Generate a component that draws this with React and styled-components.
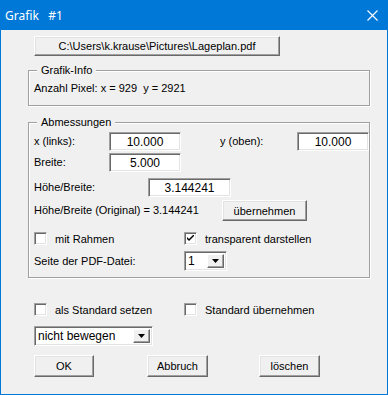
import React from 'react'
import styled, { createGlobalStyle } from 'styled-components'

const Global = createGlobalStyle`
	html, body {
		margin: 0;
		padding: 0;
		background: #f0f0f0;
	}
	body {
		font-family: "Liberation Sans", Arial, sans-serif;
		font-size: 11px;
		color: #000;
	}
`

const Window = styled.div`
	width: 388px;
	height: 395px;
	box-sizing: border-box;
	border: 1px solid #0078d7;
	border-top: none;
	background: #f0f0f0;
	display: flex;
	flex-direction: column;
`
const TitleBar = styled.div`
	height: 30px;
	flex-shrink: 0;
	background: #0078d7;
	color: #fff;
	display: flex;
	align-items: center;
	justify-content: space-between;
	padding: 0 9px 0 4px;
	font-family: "Noto Sans", "Open Sans", sans-serif;
	font-size: 12px;
	white-space: pre;
`
const Body = styled.div`
	display: flex;
	flex-direction: column;
	padding-left: 27px;
`
const Row = styled.div`
	display: flex;
	align-items: center;
	height: ${p => p.h || 19}px;
	margin-top: ${p => p.mt || 0}px;
	margin-left: ${p => p.ml || 0}px;
`
const Button = styled.div`
	box-sizing: border-box;
	width: ${p => p.w}px;
	height: ${p => p.h || 21}px;
	margin-left: ${p => p.ml || 0}px;
	margin-top: ${p => p.mt || 0}px;
	display: flex;
	align-items: center;
	justify-content: center;
	background: #f0f0f0;
	border: 1px solid;
	border-color: #fff #696969 #696969 #fff;
	box-shadow: inset -1px -1px #a0a0a0, inset 1px 1px #e3e3e3;
	white-space: nowrap;
`
const Group = styled.div`
	position: relative;
	box-sizing: border-box;
	width: 342px;
	height: ${p => p.h}px;
	margin-top: ${p => p.mt}px;
	border: 1px solid #a0a0a0;
	box-shadow: inset 1px 1px #fff, 1px 1px #fff;
	padding: ${p => p.pt}px 0 0 5px;
`
const Legend = styled.span`
	position: absolute;
	top: -7px;
	left: 8px;
	padding: 0 4px;
	line-height: 13px;
	background: #f0f0f0;
`
const Text = styled.span`
	display: inline-block;
	width: ${p => (p.w ? p.w + 'px' : 'auto')};
	margin-left: ${p => p.ml || 0}px;
	line-height: 13px;
	white-space: pre;
`
const Field = styled.div`
	box-sizing: border-box;
	width: ${p => p.w}px;
	height: ${p => p.h || 19}px;
	background: #fff;
	border: 1px solid;
	border-color: #a0a0a0 #fff #fff #a0a0a0;
	box-shadow: inset 1px 1px #696969, inset -1px -1px #e3e3e3;
	display: flex;
	align-items: center;
	justify-content: center;
	font-size: 12px;
`
const Combo = styled(Field)`
	justify-content: space-between;
	padding: 2px 2px 2px 3px;
	font-size: 12px;
`
const ArrowBtn = styled.div`
	box-sizing: border-box;
	width: 17px;
	height: 100%;
	background: #f0f0f0;
	border: 1px solid;
	border-color: #fff #696969 #696969 #fff;
	box-shadow: inset -1px -1px #a0a0a0;
	display: flex;
	align-items: center;
	justify-content: center;
`
const CheckItem = styled.label`
	display: flex;
	align-items: center;
	gap: 8px;
	width: ${p => (p.w ? p.w + 'px' : 'auto')};
`
const Box = styled.span`
	box-sizing: border-box;
	width: 13px;
	height: 13px;
	background: #fff;
	border: 1px solid;
	border-color: #a0a0a0 #fff #fff #a0a0a0;
	box-shadow: inset 1px 1px #696969, inset -1px -1px #e3e3e3;
	display: flex;
	align-items: center;
	justify-content: center;
`

const Arrow = () => (
	<svg width="7" height="4" viewBox="0 0 7 4">
		<path d="M0 0h7L3.5 4z" fill="#000" />
	</svg>
)

const Check = ({ checked, children, w }) => (
	<CheckItem w={w}>
		<Box>
			{checked && (
				<svg width="7" height="7" viewBox="0 0 7 7">
					<path d="M0 2v2l2 2 5-5V-1L2 4z" fill="#000" />
				</svg>
			)}
		</Box>
		<span>{children}</span>
	</CheckItem>
)

function App() {
	return (
		<Window>
			<Global />
			<TitleBar>
				<span>Grafik   #1</span>
				<svg width="11" height="11" viewBox="0 0 11 11">
					<path d="M0.5 0.5l10 10M10.5 0.5l-10 10" stroke="#fff" strokeWidth="1.1" />
				</svg>
			</TitleBar>
			<Body>
				<Button w={246} h={20} ml={6} mt={6}>C:\Users\k.krause\Pictures\Lageplan.pdf</Button>

				<Group h={36} mt={14} pt={11}>
					<Legend>Grafik-Info</Legend>
					<Text>Anzahl Pixel: x = 929  y = 2921</Text>
				</Group>

				<Group h={156} mt={16} pt={9}>
					<Legend>Abmessungen</Legend>
					<Row>
						<Text w={75}>x (links):</Text>
						<Field w={72}>10.000</Field>
						<Text w={77} ml={39}>y (oben):</Text>
						<Field w={72}>10.000</Field>
					</Row>
					<Row mt={2}>
						<Text w={75}>Breite:</Text>
						<Field w={72}>5.000</Field>
					</Row>
					<Row mt={6}>
						<Text w={114}>Höhe/Breite:</Text>
						<Field w={83}>3.144241</Field>
					</Row>
					<Row h={21} mt={3}>
						<Text w={188}>Höhe/Breite (Original) = 3.144241</Text>
						<Button w={85}>übernehmen</Button>
					</Row>
					<Row mt={8}>
						<Check w={150}>mit Rahmen</Check>
						<Check checked>transparent darstellen</Check>
					</Row>
					<Row h={20} mt={3}>
						<Text w={150}>Seite der PDF-Datei:</Text>
						<Combo w={43} h={20}>
							<span>1</span>
							<ArrowBtn><Arrow /></ArrowBtn>
						</Combo>
					</Row>
				</Group>

				<Row mt={22} ml={6}>
					<Check w={150}>als Standard setzen</Check>
					<Check>Standard übernehmen</Check>
				</Row>
				<Row h={20} mt={7} ml={6}>
					<Combo w={119} h={20}>
						<span>nicht bewegen</span>
						<ArrowBtn><Arrow /></ArrowBtn>
					</Combo>
				</Row>
				<Row h={22} mt={9} ml={6}>
					<Button w={60} h={22}>OK</Button>
					<Button w={61} h={22} ml={53}>Abbruch</Button>
					<Button w={61} h={22} ml={51}>löschen</Button>
				</Row>
			</Body>
		</Window>
	)
}

export default App
